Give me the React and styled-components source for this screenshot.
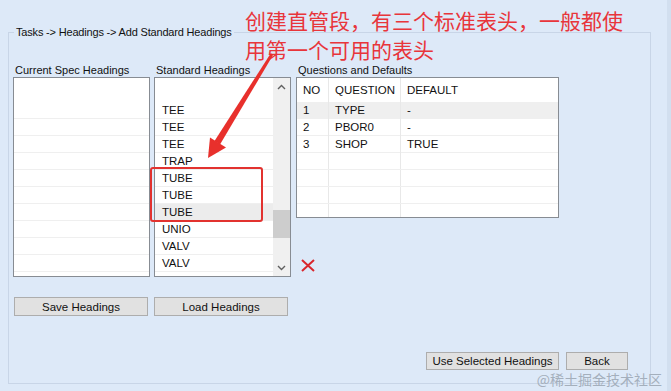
import styled, { createGlobalStyle } from 'styled-components';

const GlobalStyle = createGlobalStyle`
  body {
    margin: 0;
    font-family: 'Liberation Sans', Arial, sans-serif;
    color: #111;
  }
`;

const Window = styled.div`
  position: relative;
  width: 671px;
  height: 391px;
  box-sizing: border-box;
  padding: 25px 0 0 8px;
  background: #dde9f8;
  border-right: 4px solid #d2dfef;
  overflow: hidden;
`;

const GroupBox = styled.fieldset`
  width: 643px;
  height: 359px;
  margin: 0;
  padding: 0 0 0 4px;
  box-sizing: border-box;
  min-width: 0;
  border: 1px solid #c8d5e7;
`;

const Legend = styled.legend`
  font-size: 11px;
  line-height: 14px;
  letter-spacing: -0.18px;
  padding: 0 2px;
  margin-left: 1px;
`;

const Columns = styled.div`
  display: flex;
  margin-top: 24px;
`;

const Column = styled.div`
  display: flex;
  flex-direction: column;
  width: ${(p) => p.$w}px;
  margin-right: ${(p) => p.$gap || 0}px;
`;

const Label = styled.div`
  font-size: 11px;
  line-height: 14px;
  height: 14px;
  padding-left: 2px;
  white-space: nowrap;
`;

const ListBox = styled.div`
  display: flex;
  height: 200px;
  box-sizing: border-box;
  border: 1px solid #878c93;
  background: #fff;
  overflow: hidden;
`;

const Items = styled.div`
  flex: 1;
  padding-top: 24px;
`;

const Item = styled.div`
  height: 17px;
  line-height: 17px;
  box-sizing: border-box;
  padding-left: 7px;
  font-size: 11.5px;
  border-bottom: 1px solid #efefef;
  background: ${(p) => (p.$selected ? '#ececec' : 'transparent')};
`;

const Scrollbar = styled.div`
  width: 17px;
  display: flex;
  flex-direction: column;
  align-items: center;
  background: #f0f0f0;
`;

const ArrowBtn = styled.div`
  height: 17px;
  width: 17px;
  display: flex;
  align-items: center;
  justify-content: center;
`;

const Track = styled.div`
  flex: 1;
  width: 17px;
`;

const Thumb = styled.div`
  margin-top: 115px;
  height: 28px;
  background: #cdcdcd;
`;

const Grid = styled.div`
  height: 141px;
  box-sizing: border-box;
  border: 1px solid #878c93;
  background: #fff;
  overflow: hidden;
`;

const GridRow = styled.div`
  display: grid;
  grid-template-columns: 32px 72px 1fr;
  height: ${(p) => (p.$head ? 24 : 17)}px;
  line-height: ${(p) => (p.$head ? 24 : 17)}px;
  font-size: 11.5px;
  background: ${(p) => (p.$selected ? '#efefef' : 'transparent')};
  border-bottom: 1px solid ${(p) => (p.$head ? 'transparent' : '#efefef')};
  box-sizing: border-box;
`;

const Cell = styled.div`
  padding-left: 6px;
  border-right: 1px solid #e8e8e8;
  white-space: nowrap;
  &:last-child {
    border-right: none;
  }
`;

const DeleteIcon = styled.svg`
  margin: 41px 0 0 5px;
  display: block;
`;

const ButtonRow = styled.div`
  display: flex;
  gap: ${(p) => p.$gap}px;
  justify-content: ${(p) => (p.$end ? 'flex-end' : 'flex-start')};
  margin-top: ${(p) => p.$top}px;
  padding: 0 ${(p) => (p.$end ? 22 : 0)}px 0 ${(p) => (p.$end ? 0 : 1)}px;
`;

const Button = styled.button`
  width: ${(p) => p.$w}px;
  height: ${(p) => p.$h}px;
  padding: 0;
  font-family: inherit;
  font-size: 11.5px;
  color: #111;
  background: #e1e1e1;
  border: 1px solid #adadad;
  border-radius: 0;
`;

const Note = styled.div`
  position: absolute;
  left: 245px;
  top: 6px;
  font-family: 'Noto Sans CJK SC', sans-serif;
  font-size: 21px;
  line-height: 29px;
  color: #e8353b;
  white-space: nowrap;
`;

const Callout = styled.div`
  position: absolute;
  left: 150px;
  top: 167px;
  width: 113px;
  height: 55px;
  box-sizing: border-box;
  border: 2px solid #e2322f;
  border-radius: 3px;
`;

const Overlay = styled.svg`
  position: absolute;
  left: 0;
  top: 0;
  pointer-events: none;
`;

const Watermark = styled.div`
  position: absolute;
  right: 5px;
  bottom: 2px;
  font-family: 'Noto Sans CJK SC', sans-serif;
  font-size: 14px;
  color: #a4afbc;
  white-space: nowrap;
`;

const standard = ['TEE', 'TEE', 'TEE', 'TRAP', 'TUBE', 'TUBE', 'TUBE', 'UNIO', 'VALV', 'VALV'];
const questions = [
  ['1', 'TYPE', '-'],
  ['2', 'PBOR0', '-'],
  ['3', 'SHOP', 'TRUE'],
  ['', '', ''],
  ['', '', ''],
  ['', '', ''],
  ['', '', ''],
];

function Chevron({ up }) {
  return (
    <svg width="9" height="6" viewBox="0 0 9 6">
      <polyline
        points={up ? '1,5 4.5,1.5 8,5' : '1,1 4.5,4.5 8,1'}
        fill="none"
        stroke="#606060"
        strokeWidth="1.4"
      />
    </svg>
  );
}

export default function App() {
  return (
    <>
      <GlobalStyle />
      <Window>
        <GroupBox>
          <Legend>Tasks -&gt; Headings -&gt; Add Standard Headings</Legend>
          <Columns>
            <Column $w={137} $gap={4}>
              <Label>Current Spec Headings</Label>
              <ListBox>
                <Items>
                  {Array.from({ length: 10 }, (_, i) => (
                    <Item key={i} />
                  ))}
                </Items>
              </ListBox>
            </Column>
            <Column $w={137} $gap={5}>
              <Label>Standard Headings</Label>
              <ListBox>
                <Items>
                  {standard.map((s, i) => (
                    <Item key={i} $selected={i === 6}>
                      {s}
                    </Item>
                  ))}
                </Items>
                <Scrollbar>
                  <ArrowBtn>
                    <Chevron up />
                  </ArrowBtn>
                  <Track>
                    <Thumb />
                  </Track>
                  <ArrowBtn>
                    <Chevron />
                  </ArrowBtn>
                </Scrollbar>
              </ListBox>
            </Column>
            <Column $w={263}>
              <Label>Questions and Defaults</Label>
              <Grid>
                <GridRow $head>
                  <Cell>NO</Cell>
                  <Cell>QUESTION</Cell>
                  <Cell>DEFAULT</Cell>
                </GridRow>
                {questions.map((q, i) => (
                  <GridRow key={i} $selected={i === 0}>
                    <Cell>{q[0]}</Cell>
                    <Cell>{q[1]}</Cell>
                    <Cell>{q[2]}</Cell>
                  </GridRow>
                ))}
              </Grid>
              <DeleteIcon width="14" height="13" viewBox="0 0 14 13">
                <path d="M1 1 L13 12 M13 1 L1 12" stroke="#d9262c" strokeWidth="2" fill="none" />
              </DeleteIcon>
            </Column>
          </Columns>
          <ButtonRow $top={20} $gap={6}>
            <Button $w={134} $h={19}>Save Headings</Button>
            <Button $w={134} $h={19}>Load Headings</Button>
          </ButtonRow>
          <ButtonRow $top={36} $gap={7} $end>
            <Button $w={133} $h={18}>Use Selected Headings</Button>
            <Button $w={62} $h={18}>Back</Button>
          </ButtonRow>
        </GroupBox>

        <Note>
          <div>创建直管段，有三个标准表头，一般都使</div>
          <div>用第一个可用的表头</div>
        </Note>
        <Callout />
        <Overlay width="671" height="391" viewBox="0 0 671 391">
          <polygon points="273.2,54.8 270.8,53.2 214.5,141 220,144.6" fill="#e8302c" />
          <polygon points="210,137.5 226,147.5 208,158" fill="#e8302c" />
        </Overlay>
        <Watermark>@稀土掘金技术社区</Watermark>
      </Window>
    </>
  );
}
